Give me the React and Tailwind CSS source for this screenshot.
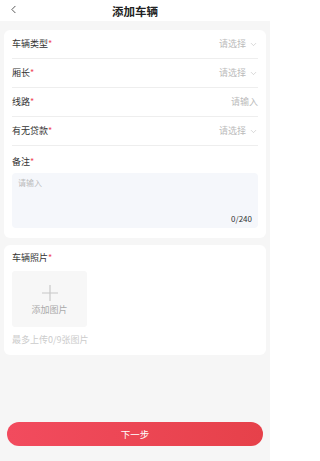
import { ChevronLeft, ChevronDown } from "lucide-react";

const font = { fontFamily: '"Noto Sans CJK SC", "Noto Sans", sans-serif' };

function Label({ children }) {
  return (
    <span className="text-[9px] leading-[12px] text-[#333]">
      {children}
      <span className="text-[#f04a5a]">*</span>
    </span>
  );
}

function Row({ label, placeholder, select }) {
  return (
    <div className="flex h-[29px] items-center justify-between border-b border-[#eeeeee]">
      <Label>{label}</Label>
      <div className="flex items-center gap-[3px] text-[9px] leading-[12px] text-[#bbbbbb]">
        <span>{placeholder}</span>
        {select && <ChevronDown className="h-[9px] w-[9px]" strokeWidth={1.5} />}
      </div>
    </div>
  );
}

export default function App() {
  return (
    <div className="flex min-h-[461px] w-[270px] flex-col bg-[#f6f6f6]" style={font}>
      <div className="relative flex h-[21px] items-center justify-center bg-white">
        <ChevronLeft className="absolute left-[7px] top-[3px] h-[13px] w-[13px] text-[#333]" strokeWidth={1.5} />
        <h1 className="text-[11.5px] font-bold leading-[16px] text-[#222]">添加车辆</h1>
      </div>

      <div className="mx-[4px] mt-[9px] rounded-[6px] bg-white px-[8px] pb-[10px]">
        <Row label="车辆类型" placeholder="请选择" select />
        <Row label="厢长" placeholder="请选择" select />
        <Row label="线路" placeholder="请输入" />
        <Row label="有无贷款" placeholder="请选择" select />
        <div className="pt-[10px]">
          <div className="flex">
            <Label>备注</Label>
          </div>
          <div className="mt-[5px] flex h-[55px] flex-col justify-between rounded-[4px] bg-[#f5f7fb] px-[6px] py-[4px]">
            <span className="text-[8px] leading-[11px] text-[#bbbbbb]">请输入</span>
            <span className="self-end text-[8px] leading-[11px] text-[#333]">0/240</span>
          </div>
        </div>
      </div>

      <div className="mx-[4px] mt-[7px] rounded-[6px] bg-white px-[8px] pb-[9px] pt-[7px]">
        <div className="flex">
          <Label>车辆照片</Label>
        </div>
        <div className="mt-[7px] flex h-[56px] w-[75px] flex-col items-center justify-center rounded-[3px] bg-[#f7f7f7]">
          <svg width="20" height="20" viewBox="0 0 20 20" className="text-[#c8c8c8]">
            <path d="M10 2v16M2 10h16" stroke="currentColor" strokeWidth="1.2" />
          </svg>
          <span className="mt-[1px] text-[9px] leading-[12px] text-[#aaaaaa]">添加图片</span>
        </div>
        <p className="mt-[7px] text-[9px] leading-[12px] text-[#cccccc]">最多上传0/9张图片</p>
      </div>

      <div className="flex-1" />

      <button
        type="button"
        className="mx-[7px] mb-[15px] h-[24px] rounded-full bg-gradient-to-r from-[#f24b5e] to-[#e6414a] text-[9.5px] text-white"
      >
        下一步
      </button>
    </div>
  );
}
